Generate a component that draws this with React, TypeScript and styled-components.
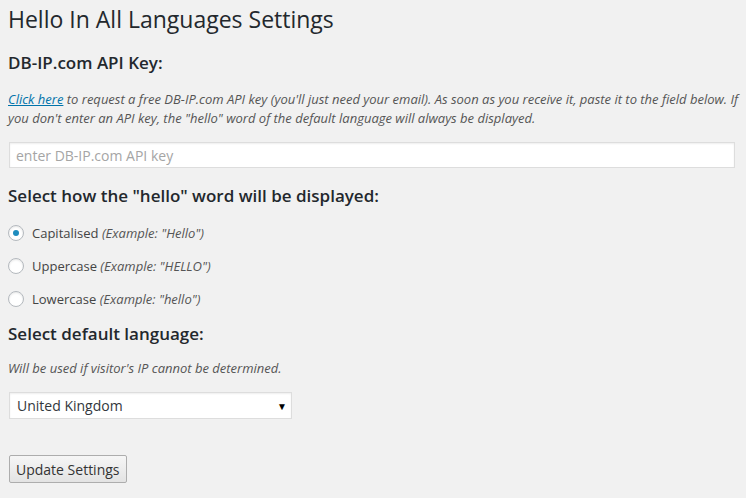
import React, { useState } from 'react'
import styled, { createGlobalStyle } from 'styled-components'

const GlobalStyle = createGlobalStyle`
  html, body {
    margin: 0;
    padding: 0;
    background: #f1f1f1;
  }
  body {
    font-family: 'Open Sans', 'Liberation Sans', sans-serif;
    color: #444;
    font-size: 13px;
  }
`

const Wrap = styled.div`
  padding: 0 8px;
  width: 730px;
`

const Title = styled.h2`
  font-size: 23px;
  font-weight: 400;
  line-height: 29px;
  color: #23282d;
  margin: 5px 0 0;
`

const SectionTitle = styled.h3<{ $top?: number }>`
  font-size: 17px;
  font-weight: 600;
  line-height: 24px;
  color: #23282d;
  margin: ${p => p.$top ?? 20}px 0 0;
`

const Note = styled.p<{ $top?: number }>`
  font-style: italic;
  font-size: 13px;
  line-height: 19px;
  color: #555;
  width: 740px;
  margin: ${p => p.$top ?? 15}px 0 0;

  a {
    color: #0073aa;
    text-decoration: underline;
  }
`

const TextInput = styled.input`
  display: block;
  box-sizing: border-box;
  width: 726px;
  height: 26px;
  margin: 14px 0 0 1px;
  padding: 0 6px;
  border: 1px solid #ddd;
  background: #fff;
  box-shadow: inset 0 1px 2px rgba(0, 0, 0, 0.07);
  font-family: inherit;
  font-size: 14px;
  color: #32373c;
  outline: none;

  &::placeholder {
    color: #a5a5a5;
  }
`

const RadioList = styled.div`
  display: flex;
  flex-direction: column;
  gap: 13px;
  margin-top: 15px;
`

const RadioRow = styled.label`
  display: flex;
  align-items: center;
  gap: 8px;
  height: 20px;
  font-size: 13px;
  color: #444;
  cursor: pointer;

  em {
    color: #555;
  }
`

const Radio = styled.input`
  appearance: none;
  box-sizing: border-box;
  width: 16px;
  height: 16px;
  margin: 0;
  border: 1px solid #b4b9be;
  border-radius: 50%;
  background: #fff;
  box-shadow: inset 0 1px 2px rgba(0, 0, 0, 0.1);
  display: grid;
  place-items: center;
  flex-shrink: 0;

  &:checked::before {
    content: '';
    width: 6px;
    height: 6px;
    border-radius: 50%;
    background: #1e8cbe;
  }
`

const SelectBox = styled.div`
  position: relative;
  width: 283px;
  margin: 14px 0 0 1px;
`

const Select = styled.select`
  appearance: none;
  box-sizing: border-box;
  width: 100%;
  height: 27px;
  padding: 0 24px 0 7px;
  border: 1px solid #ddd;
  background: #fff;
  box-shadow: inset 0 1px 2px rgba(0, 0, 0, 0.07);
  font-family: inherit;
  font-size: 14px;
  color: #32373c;
  outline: none;
`

const Arrow = styled.span`
  position: absolute;
  right: 5px;
  top: 7px;
  font-size: 10px;
  color: #000;
  pointer-events: none;
`

const Button = styled.button`
  display: block;
  margin: 36px 0 0 1px;
  height: 28px;
  padding: 0 6px;
  border: 1px solid #adadad;
  border-radius: 2px;
  background: linear-gradient(#f6f6f6, #e3e3e3);
  font-family: inherit;
  font-size: 14px;
  color: #333;
  cursor: pointer;
`

const options = [
  { value: 'cap', label: 'Capitalised', example: 'Hello' },
  { value: 'upper', label: 'Uppercase', example: 'HELLO' },
  { value: 'lower', label: 'Lowercase', example: 'hello' },
]

const App = () => {
  const [mode, setMode] = useState('cap')
  return (
    <>
      <GlobalStyle />
      <Wrap>
        <Title>Hello In All Languages Settings</Title>

        <SectionTitle $top={17}>DB-IP.com API Key:</SectionTitle>
        <Note>
          <a href="#">Click here</a> to request a free DB-IP.com API key (you'll just need your email). As soon as you
          receive it, paste it to the field below. If you don't enter an API key, the "hello" word of the default
          language will always be displayed.
        </Note>
        <TextInput type="text" placeholder="enter DB-IP.com API key" />

        <SectionTitle $top={16}>Select how the "hello" word will be displayed:</SectionTitle>
        <RadioList>
          {options.map(o => (
            <RadioRow key={o.value}>
              <Radio type="radio" name="mode" checked={mode === o.value} onChange={() => setMode(o.value)} />
              <span>
                {o.label} <em>(Example: "{o.example}")</em>
              </span>
            </RadioRow>
          ))}
        </RadioList>

        <SectionTitle $top={13}>Select default language:</SectionTitle>
        <Note $top={13}>Will be used if visitor's IP cannot be determined.</Note>
        <SelectBox>
          <Select defaultValue="gb">
            <option value="gb">United Kingdom</option>
          </Select>
          <Arrow>▼</Arrow>
        </SelectBox>

        <Button type="button">Update Settings</Button>
      </Wrap>
    </>
  )
}

export default App
